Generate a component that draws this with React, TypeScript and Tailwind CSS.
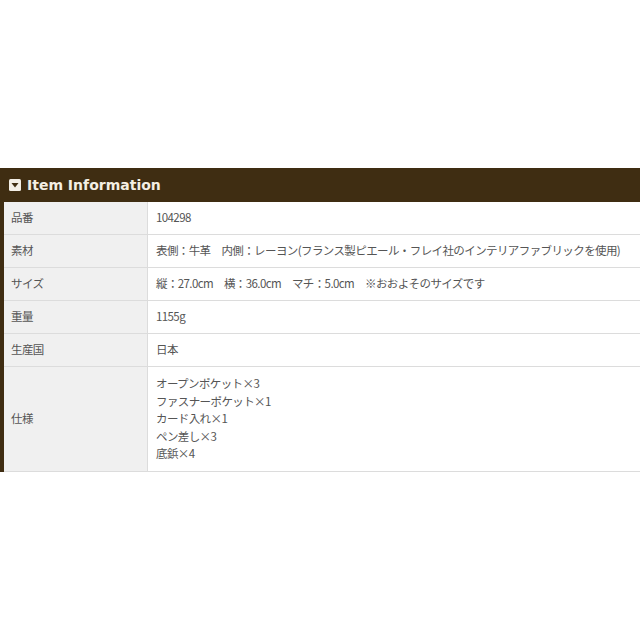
export default function App() {
  const rows: [string, string[]][] = [
    ["品番", ["104298"]],
    ["素材", ["表側：牛革　内側：レーヨン(フランス製ピエール・フレイ社のインテリアファブリックを使用)"]],
    ["サイズ", ["縦：27.0cm　横：36.0cm　マチ：5.0cm　※おおよそのサイズです"]],
    ["重量", ["1155g"]],
    ["生産国", ["日本"]],
    ["仕様", ["オープンポケット×3", "ファスナーポケット×1", "カード入れ×1", "ペン差し×3", "底鋲×4"]],
  ];
  return (
    <div className="w-[640px] h-[640px] bg-white overflow-hidden" style={{ fontFamily: '"Noto Sans CJK JP", "Noto Sans", sans-serif' }}>
      <div className="h-[168px]" />
      <div className="h-[34px] bg-[#3f2d12] flex items-center pl-[9px] gap-[6px]">
        <svg width="12" height="12" viewBox="0 0 12 12">
          <rect x="0" y="0" width="12" height="12" rx="1.5" fill="#f2eee6" />
          <path d="M2.5 4 L9.5 4 L6 8.5 Z" fill="#3f2d12" />
        </svg>
        <span className="text-[14px] font-bold text-[#f4efe4]" style={{ fontFamily: '"DejaVu Sans", sans-serif' }}>Item Information</span>
      </div>
      <div className="border-l-[4px] border-[#3f2d12]">
        {rows.map(([k, v], i) => (
          <div key={i} className="flex border-b border-[#dcdcdc] text-[11.5px] tracking-[-0.6px] text-[#555]">
            <div className="w-[144px] shrink-0 bg-[#f0f0f0] border-r border-[#dcdcdc] pl-[7px] flex items-center">{k}</div>
            <div className={`pl-[8px] flex flex-col justify-center whitespace-nowrap ${v.length > 1 ? "py-[8px] leading-[17.5px]" : "h-[32px]"}`}>
              {v.map((l, j) => <div key={j}>{l}</div>)}
            </div>
          </div>
        ))}
      </div>
    </div>
  );
}
